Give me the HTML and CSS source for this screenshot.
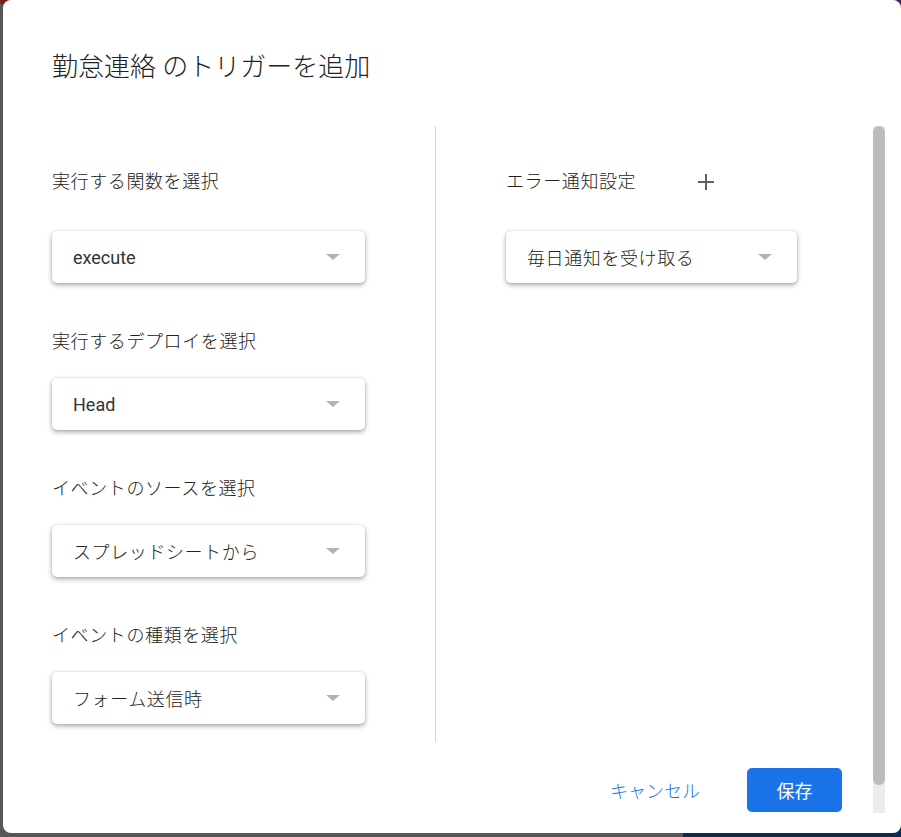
FILE: index.html
```html
<!DOCTYPE html>
<html lang="ja">
<head>
<meta charset="utf-8">
<title>トリガーを追加</title>
<link rel="stylesheet" href="styles.css">
</head>
<body>
<div class="page">
  <div class="page-red"></div>
  <div class="page-purple"></div>
  <div class="page-navy"></div>
</div>
<div class="dialog">
  <h1 class="title">勤怠連絡 のトリガーを追加</h1>
  <div class="scroll">
    <div class="scroll-content">
      <div class="columns">
        <div class="col col-left">
          <div class="field first">
            <div class="label">実行する関数を選択</div>
            <div class="select"><span class="value latin">execute</span><span class="arrow"></span></div>
          </div>
          <div class="field">
            <div class="label">実行するデプロイを選択</div>
            <div class="select"><span class="value latin">Head</span><span class="arrow"></span></div>
          </div>
          <div class="field">
            <div class="label">イベントのソースを選択</div>
            <div class="select"><span class="value">スプレッドシートから</span><span class="arrow"></span></div>
          </div>
          <div class="field">
            <div class="label">イベントの種類を選択</div>
            <div class="select"><span class="value">フォーム送信時</span><span class="arrow"></span></div>
          </div>
        </div>
        <div class="col col-right">
          <div class="field first">
            <div class="label-row">
              <div class="label err-label">エラー通知設定</div>
              <svg class="plus" width="18" height="18" viewBox="0 0 18 18"><path d="M9 1v16M1 9h16" stroke="#5f6368" stroke-width="2" fill="none"/></svg>
            </div>
            <div class="select select-right"><span class="value">毎日通知を受け取る</span><span class="arrow"></span></div>
          </div>
        </div>
      </div>
      <div class="actions">
        <button class="btn btn-text">キャンセル</button>
        <button class="btn btn-primary">保存</button>
      </div>
    </div>
    <div class="scrollbar"><div class="thumb"></div></div>
  </div>
</div>
</body>
</html>
```
FILE: styles.css
```css
html, body {
  margin: 0;
  padding: 0;
  height: 100%;
}
body {
  background: #575757;
  font-family: Roboto, "Noto Sans CJK JP", sans-serif;
  color: #222;
  overflow: hidden;
}
.page {
  position: absolute;
  inset: 0;
}
.page-red {
  position: absolute;
  left: 0;
  top: 0;
  width: 14px;
  height: 4px;
  background: #7a1f1a;
}
.page-purple {
  position: absolute;
  right: 0;
  top: 0;
  width: 14px;
  height: 10px;
  background: #3a2554;
}
.page-navy {
  position: absolute;
  left: 683px;
  bottom: 0;
  width: 218px;
  height: 24px;
  background: #0f2a4e;
}
.dialog {
  position: absolute;
  left: 3px;
  top: 0;
  width: 898px;
  height: 833px;
  background: #fff;
  border-radius: 8px;
  display: flex;
  flex-direction: column;
}
.title {
  margin: 0;
  height: 126px;
  box-sizing: border-box;
  padding: 51px 0 0 49px;
  font-size: 26px;
  line-height: 32px;
  font-weight: 300;
  color: #222;
}
.scroll {
  display: flex;
  height: 687px;
}
.scroll-content {
  flex: 1;
  padding: 0 31px 0 49px;
}
.columns {
  display: flex;
  height: 616px;
}
.col-left {
  width: 384px;
  border-right: 1px solid #d2d2d2;
  padding-top: 44px;
  box-sizing: border-box;
}
.col-right {
  padding-top: 44px;
  padding-left: 70px;
}
.field + .field {
  margin-top: 47px;
}
.label {
  font-size: 18px;
  line-height: 24px;
  font-weight: 300;
  color: #222;
  letter-spacing: 0.6px;
}
.label-row {
  display: flex;
  align-items: center;
  height: 24px;
}
.err-label {
  width: 191px;
}
.plus {
  display: block;
}
.select {
  margin-top: 24px;
  width: 313px;
  height: 52px;
  box-sizing: border-box;
  padding: 0 25px 0 21px;
  display: flex;
  align-items: center;
  justify-content: space-between;
  background: #fff;
  border-radius: 5px;
  box-shadow: 0 2px 5px rgba(0, 0, 0, 0.35), 0 0 2px rgba(0, 0, 0, 0.12);
}
.first .select {
  margin-top: 37px;
}
.select-right {
  width: 291px;
}
.value {
  font-size: 18px;
  font-weight: 300;
  color: #222;
  letter-spacing: 0.6px;
}
.value.latin {
  font-weight: 400;
  letter-spacing: 0;
  color: #333;
}
.arrow {
  width: 0;
  height: 0;
  border-left: 7.5px solid transparent;
  border-right: 7.5px solid transparent;
  border-top: 6px solid #b3b3b3;
}
.actions {
  margin-top: 26px;
  display: flex;
  justify-content: flex-end;
  align-items: center;
}
.btn {
  font-family: Roboto, "Noto Sans CJK JP", sans-serif;
  font-size: 18px;
  font-weight: 300;
  height: 44px;
  border: none;
  border-radius: 5px;
  cursor: pointer;
}
.btn-text {
  background: transparent;
  color: #1a73e8;
  padding: 0 16px;
  margin-right: 31px;
}
.btn-primary {
  background: #1a73e8;
  color: #fff;
  width: 95px;
  font-weight: 400;
}
.scrollbar {
  width: 12px;
  margin-right: 16px;
  background: #ececec;
  height: 687px;
}
.thumb {
  height: 659px;
  background: #bcbcbc;
  border-radius: 6px;
}
```
